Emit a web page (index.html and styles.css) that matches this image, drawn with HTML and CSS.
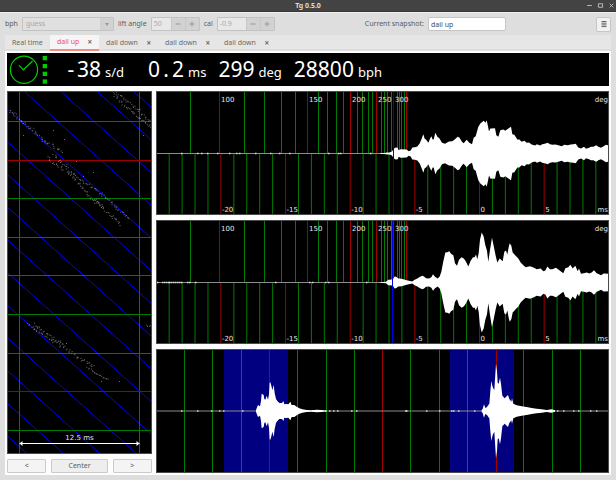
FILE: index.html
```html
<!DOCTYPE html>
<html lang="en">
<head>
    <meta charset="UTF-8">
    <meta name="viewport" content="width=device-width, initial-scale=1.0">
    <title>Tg 0.5.0</title>
    <link rel="stylesheet" href="styles.css">
</head>
<body>

<header class="titlebar">
    <h1>Tg 0.5.0</h1>
    <div class="window-buttons">
        <button type="button" aria-label="Minimize"><svg viewBox="0 0 6 6"><path d="M1 3h4"/></svg></button>
        <button type="button" aria-label="Maximize"><svg viewBox="0 0 6 6"><path d="M1.2 1.5h3.6v3h-3.6z"/></svg></button>
        <button type="button" aria-label="Close"><svg viewBox="0 0 6 6"><path d="M1.5 1.5l3 3M4.5 1.5l-3 3"/></svg></button>
    </div>
</header>

<div class="toolbar">
    <label for="bph">bph</label>
    <div class="combo">
        <select id="bph" disabled>
            <option>guess</option>
        </select>
        <span class="combo-arrow"></span>
    </div>

    <label for="lift">lift angle</label>
    <div class="spin">
        <input class="spin-lift" type="text" id="lift" value="50" disabled>
        <button type="button" disabled aria-label="Decrease lift angle"><svg viewBox="0 0 8 8"><path d="M1.5 4h5"/></svg></button>
        <button type="button" disabled aria-label="Increase lift angle"><svg viewBox="0 0 8 8"><path d="M1.5 4h5M4 1.5v5"/></svg></button>
    </div>

    <label for="cal">cal</label>
    <div class="spin">
        <input class="spin-cal" type="text" id="cal" value="-0.9" disabled>
        <button type="button" disabled aria-label="Decrease cal"><svg viewBox="0 0 8 8"><path d="M1.5 4h5"/></svg></button>
        <button type="button" disabled aria-label="Increase cal"><svg viewBox="0 0 8 8"><path d="M1.5 4h5M4 1.5v5"/></svg></button>
    </div>

    <div class="snapshot">
        <label for="snapshot">Current snapshot:</label>
        <input type="text" id="snapshot" value="dail up">
    </div>
    <button type="button" class="menu-button" aria-label="Menu">
        <svg viewBox="0 0 8 8"><path d="M1.5 1.5h5M1.5 3.2h5M1.5 4.9h5M1.5 6.6h5"/></svg>
    </button>
</div>

<nav class="tabs">
    <div class="tab tab-live"><button type="button">Real time</button></div>
    <div class="tab active"><button type="button">dail up</button><button type="button" class="close" aria-label="Close tab">×</button></div>
    <div class="tab"><button type="button">dail down</button><button type="button" class="close" aria-label="Close tab">×</button></div>
    <div class="tab"><button type="button">dail down</button><button type="button" class="close" aria-label="Close tab">×</button></div>
    <div class="tab"><button type="button">dail down</button><button type="button" class="close" aria-label="Close tab">×</button></div>
</nav>

<main class="content">
    <section class="readout">
        <svg class="clock" viewBox="0 0 45 33">
            <circle cx="17" cy="16.7" r="13.6"/>
            <path d="M12 12.4l4.4 4.4 9.2-8.8"/>
            <g class="signal">
                <rect x="35.7" y="3" width="4.3" height="4.3"/>
                <rect x="35.7" y="11" width="4.3" height="4.3"/>
                <rect x="35.7" y="18.7" width="4.3" height="4.3"/>
                <rect x="35.7" y="26.4" width="4.3" height="4.3"/>
            </g>
        </svg>
        <p><span class="value wide"><span class="cell">-</span>38</span><span class="unit">s/d</span></p>
        <p><span class="value wide">0<span class="cell">.</span>2</span><span class="unit">ms</span></p>
        <p><span class="value">299</span><span class="unit">deg</span></p>
        <p><span class="value">28800</span><span class="unit">bph</span></p>
    </section>

    <section class="panels">
        <div class="paper">
            <svg class="plot" id="paperstrip"></svg>
            <div class="paper-buttons">
                <button type="button">&lt;</button>
                <button type="button" class="center">Center</button>
                <button type="button">&gt;</button>
            </div>
        </div>
        <div class="waves">
            <svg class="plot" id="tic"></svg>
            <svg class="plot" id="toc"></svg>
            <svg class="plot" id="period"></svg>
        </div>
    </section>
</main>

<script src="plots.js"></script>
</body>
</html>
```

FILE: styles.css
```css
* {
    box-sizing: border-box;
}
body {
    margin: 0;
    height: 100vh;
    display: flex;
    flex-direction: column;
    background-color: #dedede;
    color: #5c5c5c;
    font-family: "Noto Sans", "Open Sans", sans-serif;
    font-size: 7px;
    line-height: 10px;
    overflow: hidden;
}
button, input, select {
    font: inherit;
    color: inherit;
    margin: 0;
    padding: 0;
    border: none;
    background: none;
}
button {
    display: flex;
    align-items: center;
    justify-content: center;
}

/* Title bar */
.titlebar {
    display: grid;
    grid-template-columns: 1fr auto 1fr;
    align-items: center;
    height: 12px;
    background-color: #434343;
    border-bottom: 1px solid #363636;
    color: #dcdcdc;
}
.titlebar h1 {
    grid-column: 2;
    margin: 0;
    font-size: 7px;
    font-weight: bold;
}
.window-buttons {
    display: flex;
    justify-content: flex-end;
    gap: 4px;
    padding-right: 1px;
}
.window-buttons svg {
    display: block;
    width: 7px;
    height: 7px;
    fill: none;
    stroke: #c0c0c0;
    stroke-width: 0.8;
}

/* Toolbar */
.toolbar {
    display: flex;
    align-items: center;
    gap: 4px;
    height: 23px;
    padding: 0 5px;
    border-top: 1px solid #f0f0f0;
}
.combo {
    display: flex;
    position: relative;
}
.combo select {
    width: 92px;
    height: 14px;
    padding: 0 3px;
    appearance: none;
    border: 1px solid #c3c3c3;
    border-radius: 1px;
    background: linear-gradient(to left, #d2d2d2 13px, #e0e0e0 13px);
    color: #a8a8a8;
    opacity: 1;
}
.combo-arrow {
    position: absolute;
    right: 5px;
    top: 6px;
    border: 2px solid transparent;
    border-top: 3px solid #999;
    border-bottom: none;
}
.spin {
    display: flex;
    height: 14px;
    border: 1px solid #c3c3c3;
    border-radius: 1px;
    background-color: #d2d2d2;
}
.spin input {
    padding: 0 2px;
    background-color: #e8e8e8;
    color: #a8a8a8;
}
.spin-lift {
    width: 19px;
}
.spin-cal {
    width: 28px;
}
.spin button {
    width: 14px;
    border-left: 1px solid #c8c8c8;
}
.spin svg {
    width: 8px;
    height: 8px;
    fill: none;
    stroke: #999;
    stroke-width: 1;
}
.snapshot {
    display: flex;
    align-items: center;
    gap: 4px;
    margin-left: auto;
    margin-right: 86px;
}
.snapshot input {
    width: 78px;
    height: 14px;
    padding: 0 2px;
    border: 1px solid #c6c6c6;
    border-radius: 2px;
    background-color: #fff;
    color: #4c4c4c;
}
.menu-button {
    width: 15px;
    height: 15px;
    border: 1px solid #c6c6c6;
    border-radius: 2px;
    background-color: #f2f2f2;
}
.menu-button svg {
    width: 8px;
    height: 8px;
    stroke: #666;
    stroke-width: 1;
}

/* Tabs */
.tabs {
    display: flex;
    height: 14px;
    margin: 0 5px 2px;
    background-color: #e6e6e6;
}
.tab {
    display: flex;
    align-items: center;
    justify-content: space-between;
    width: 59px;
    height: 16px;
    padding: 0 7px 1px 7px;
    color: #6a6a6a;
}
.tab-live {
    width: 45px;
}
.tab .close {
    font-size: 8px;
    font-weight: bold;
}
.tab.active {
    width: 49px;
    background-color: #f5f5f5;
    border-bottom: 2px solid #f48a84;
    padding-bottom: 0;
    color: #f0544c;
}
.tab.active .close {
    color: #6a6a6a;
}

/* Content */
.content {
    flex: 1;
    min-height: 0;
    display: flex;
    flex-direction: column;
    gap: 5px;
    margin: 0 5px 5px;
    padding: 2px;
    background-color: #fdfdfd;
}
.readout {
    display: flex;
    gap: 12px;
    height: 33px;
    background-color: #000;
    color: #fff;
}
.readout p {
    display: flex;
    align-items: baseline;
    gap: 4px;
    margin: 0;
    line-height: 33px;
}
.clock {
    width: 45px;
    height: 33px;
    margin-right: -11px;
    fill: none;
    stroke: #00cc00;
    stroke-width: 1.2;
}
.clock .signal {
    fill: #00cc00;
    stroke: none;
}
.value {
    font-size: 21px;
}
.value.wide {
    min-width: 48px;
    text-align: right;
}
.cell {
    display: inline-block;
    width: 12px;
    text-align: center;
}
.unit {
    font-size: 13px;
}
.panels {
    flex: 1;
    min-height: 0;
    display: grid;
    grid-template-columns: 145fr 453fr;
    gap: 4px;
}
.paper, .waves {
    display: flex;
    flex-direction: column;
    gap: 5px;
    min-width: 0;
    min-height: 0;
}
.plot {
    flex: 1;
    min-height: 0;
    width: 100%;
    display: block;
    background-color: #000;
}
.paper-buttons {
    display: flex;
    gap: 5px;
}
.paper-buttons button {
    flex: 39;
    height: 14px;
    border: 1px solid #cacaca;
    border-radius: 1px;
    background-color: #f4f4f4;
}
.paper-buttons .center {
    flex: 57;
    background-color: #eee;
}

/* Plot drawing */
.frame {
    fill: none;
    stroke: #4a4a4a;
}
.green {
    stroke: #007c00;
}
.red {
    stroke: #a00000;
}
.blue {
    stroke: #0000e8;
}
.slope {
    stroke: #0000ff;
}
.axis {
    stroke: #8c8c8c;
}
.window {
    fill: #000080;
}
.wave {
    fill: #fff;
}
.blip {
    fill: #fff;
    opacity: 0.7;
}
.dots {
    fill: #fff;
    opacity: 0.42;
}
.arrow {
    fill: #fff;
    stroke: #fff;
}
.plot text {
    font-family: "DejaVu Sans", sans-serif;
    font-size: 7px;
    fill: #e6e6e6;
}
```

FILE: plots.js
```javascript
const NS = 'http://www.w3.org/2000/svg';

// Base sizes that the data below is given in
const WAVE_W = 453, WAVE_H = 124;
const PAPER_W = 145, PAPER_H = 363;

const degTicks = [34, 88, 108, 125, 139, 151, 162, 171, 180, 187, 201, 206, 212, 216, 225, 228, 231, 235, 241, 243, 245, 248];
const degMajor = [[63, '100'], [151, '150'], [194, '200'], [220, '250'], [237, '300'], [250, '']];

// Envelopes as [x, half height], in thirds of a pixel
const ticWave = [
    [0, 1], [28, 3], [36, 6], [41, 14], [47, 18], [53, 17], [56, 10], [62, 13], [80, 12], [86, 7], [92, 9], [97, 18],
    [105, 19], [112, 21], [119, 30], [124, 42], [130, 58], [134, 44], [138, 42], [145, 32], [150, 44], [154, 52],
    [158, 42], [161, 42], [166, 62], [172, 50], [178, 46], [186, 32], [195, 29], [207, 36], [217, 37], [225, 43],
    [233, 50], [238, 48], [246, 35], [251, 31], [260, 41], [268, 32], [276, 28], [281, 47], [287, 52], [295, 80],
    [301, 90], [311, 98], [317, 92], [320, 100], [324, 82], [327, 66], [331, 75], [345, 76], [349, 55], [355, 50],
    [361, 70], [370, 72], [376, 68], [384, 74], [393, 80], [397, 58], [403, 56], [412, 42], [418, 42], [425, 35],
    [433, 38], [440, 32], [447, 33], [455, 27], [465, 24], [471, 28], [480, 24], [487, 28], [497, 30], [503, 32],
    [510, 28], [518, 26], [526, 27], [535, 25], [545, 22], [553, 26], [563, 25], [572, 27], [580, 28], [587, 29],
    [595, 18], [603, 15], [612, 20], [618, 14], [627, 17], [633, 20], [640, 20], [649, 25], [655, 20], [663, 17],
    [671, 22], [678, 26], [688, 24]
];
const tocWave = [
    [0, 1], [18, 2], [25, 8], [38, 9], [44, 18], [48, 17], [55, 12], [65, 11], [80, 7], [97, 3], [104, 8], [112, 12],
    [120, 17], [128, 20], [133, 17], [138, 13], [147, 12], [154, 16], [159, 25], [165, 17], [173, 12], [179, 18],
    [184, 32], [190, 64], [196, 90], [202, 91], [208, 94], [213, 86], [220, 82], [225, 58], [231, 50], [237, 68],
    [245, 76], [252, 71], [258, 62], [265, 48], [272, 65], [279, 76], [284, 76], [288, 84], [292, 70], [296, 88],
    [300, 128], [305, 150], [311, 138], [316, 112], [321, 95], [325, 62], [330, 98], [336, 134], [341, 110],
    [347, 80], [352, 60], [359, 72], [368, 64], [373, 92], [378, 96], [382, 84], [386, 106], [389, 118], [394, 110],
    [398, 90], [407, 80], [415, 72], [422, 60], [430, 52], [437, 46], [450, 49], [462, 44], [470, 40], [482, 42],
    [490, 34], [496, 36], [502, 48], [510, 40], [517, 40], [528, 44], [536, 38], [544, 32], [550, 28], [556, 43],
    [565, 46], [571, 53], [578, 42], [586, 50], [593, 34], [597, 42], [603, 26], [611, 28], [620, 30], [628, 27],
    [635, 30], [642, 37], [650, 28], [657, 25], [663, 22], [671, 27], [688, 26]
];
const periodTic = [
    [318, 2], [320, 8], [324, 18], [330, 14], [333, 30], [335, 52], [341, 48], [343, 36], [346, 34], [350, 46],
    [354, 34], [357, 50], [359, 85], [361, 86], [364, 76], [367, 62], [371, 78], [374, 54], [378, 36], [382, 30],
    [388, 24], [396, 24], [400, 30], [403, 20], [409, 21], [415, 20], [421, 28], [425, 18], [433, 18], [440, 13],
    [448, 8], [457, 5], [470, 3], [485, 2], [500, 4], [515, 3], [530, 1]
];
const periodToc = [
    [305, 3], [308, 6], [312, 20], [316, 9], [321, 12], [325, 18], [328, 22], [331, 60], [334, 90], [338, 72],
    [343, 62], [345, 95], [348, 142], [351, 120], [353, 85], [356, 82], [360, 100], [363, 82], [367, 46], [374, 38],
    [384, 48], [388, 36], [394, 28], [396, 38], [400, 22], [410, 17], [425, 14], [440, 12], [455, 9], [470, 7],
    [485, 5], [500, 3], [515, 5], [525, 2]
];

// Beat trails on the paper strip: spread, then points
const trails = [
    [3, [[0, 17], [16, 32], [30, 43], [38, 53]]],
    [2, [[38, 50], [50, 57], [55, 62]]],
    [2, [[40, 66], [62, 82], [83, 106], [98, 116]]],
    [2, [[46, 63], [70, 86], [97, 105], [121, 128]]],
    [2, [[84, 107], [100, 121], [115, 134]]],
    [2, [[105, 2], [119, 16], [145, 37]]],
    [2, [[110, 2], [123, 12], [145, 33]]],
    [2, [[20, 233], [56, 256], [74, 268], [88, 276]]],
    [2, [[26, 233], [50, 249], [56, 253]]],
    [1, [[80, 276], [92, 284], [102, 289]]],
    [2, [[140, 233], [145, 236]]]
];
const strayDots = [[46, 39], [57, 48], [16, 44], [69, 70], [76, 85], [86, 81], [136, 44], [0, 131], [59, 252], [94, 290], [112, 290]];

function add(parent, tag, attrs, text) {
    const el = document.createElementNS(NS, tag);
    for (const key in attrs) el.setAttribute(key, attrs[key]);
    if (text) el.textContent = text;
    parent.appendChild(el);
    return el;
}

function line(svg, cls, x1, y1, x2, y2) {
    add(svg, 'line', { class: cls, x1, y1, x2, y2 });
}

function start(id, baseW, baseH) {
    const svg = document.getElementById(id);
    svg.innerHTML = '';
    const w = svg.clientWidth, h = svg.clientHeight;
    return { svg, w, h, sx: w / baseW, sy: h / baseH };
}

function frame(p) {
    add(p.svg, 'rect', { class: 'frame', x: 0.5, y: 0.5, width: p.w - 1, height: p.h - 1 });
}

function envelope(p, data, offset, mid) {
    const top = data.map(([x, a]) => `${(offset + x / 3) * p.sx},${mid - a / 3 * p.sy}`);
    const bottom = data.map(([x, a]) => `${(offset + x / 3) * p.sx},${mid + a / 3 * p.sy}`).reverse();
    add(p.svg, 'polygon', { class: 'wave', points: top.concat(bottom).join(' ') });
}

function blips(p, xs, mid) {
    xs.forEach(x => add(p.svg, 'rect', { class: 'blip', x: x * p.sx, y: mid - 0.8, width: 1.5, height: 1.6 }));
}

function drawBeat(id, wave, noise, marker) {
    const p = start(id, WAVE_W, WAVE_H);
    const mid = Math.round(p.h / 2) + 0.5;

    degTicks.forEach(x => line(p.svg, 'green', x * p.sx + 0.5, 0, x * p.sx + 0.5, mid));
    degMajor.forEach(([x]) => line(p.svg, 'red', x * p.sx + 0.5, 0, x * p.sx + 0.5, mid));
    for (let ms = -24; ms < 10; ms++) {
        const x = (323.5 + ms * 12.93) * p.sx;
        line(p.svg, ms % 5 ? 'green' : 'red', x, mid, x, p.h);
    }
    line(p.svg, 'axis', 0, mid, p.w, mid);
    envelope(p, wave, 224, mid);
    blips(p, noise, mid);
    line(p.svg, 'blue', marker * p.sx, 0, marker * p.sx, p.h);
    frame(p);

    degMajor.forEach(([x, label]) => {
        if (label) add(p.svg, 'text', { x: x * p.sx + 2, y: 11 }, label);
    });
    for (let ms = -20; ms <= 5; ms += 5) {
        add(p.svg, 'text', { x: (323.5 + ms * 12.93) * p.sx + 1, y: p.h - 3 }, String(ms));
    }
    add(p.svg, 'text', { x: p.w - 1, y: 11, 'text-anchor': 'end' }, 'deg');
    add(p.svg, 'text', { x: p.w - 1, y: p.h - 3, 'text-anchor': 'end' }, 'ms');
}

function drawPeriod() {
    const p = start('period', WAVE_W, WAVE_H);
    const mid = Math.round(p.h / 2);
    [68, 294].forEach(x => add(p.svg, 'rect', { class: 'window', x: x * p.sx, y: 0, width: 64 * p.sx, height: p.h }));
    [28, 56, 85, 141, 170, 198, 254, 283, 311, 367, 396, 424].forEach(x => line(p.svg, 'green', x * p.sx + 0.5, 0, x * p.sx + 0.5, p.h));
    [113, 226, 340].forEach(x => line(p.svg, 'red', x * p.sx + 0.5, 0, x * p.sx + 0.5, p.h));
    line(p.svg, 'axis', 0, mid, p.w, mid);
    envelope(p, periodTic, -6, mid);
    envelope(p, periodToc, 224, mid);
    blips(p, [25, 41, 55, 63, 67, 86, 156, 161, 165, 169, 173, 177, 181, 195, 200, 249, 250, 270, 283, 295, 297, 302, 318, 392, 397, 401, 407, 417, 422, 434, 440], mid);
    frame(p);
}

function drawPaper() {
    const p = start('paperstrip', PAPER_W, PAPER_H);
    for (let y = -4; y < 12; y++) {
        line(p.svg, 'slope', 0, (17.7 + y * 32.7) * p.sy, p.w, (17.7 + y * 32.7 + 130) * p.sy);
    }
    [12, 132].forEach(x => line(p.svg, 'green', x * p.sx + 0.5, 0, x * p.sx + 0.5, p.h));
    for (let i = 0; i < 9; i++) {
        const y = Math.floor((30.7 + i * 38.55) * p.sy) + 0.5;
        line(p.svg, i === 1 || i === 7 ? 'red' : 'green', 0, y, p.w, y);
    }

    // Fixed seed so that a resize gives the same trace
    let seed = 7;
    const rand = () => (seed = seed * 16807 % 2147483647) / 2147483647 - 0.5;
    const dots = add(p.svg, 'g', { class: 'dots' });
    const dot = (x, y) => add(dots, 'rect', { x: x * p.sx, y: y * p.sy, width: 1, height: 1 });
    trails.forEach(([spread, pts]) => {
        for (let i = 1; i < pts.length; i++) {
            const [x1, y1] = pts[i - 1], [x2, y2] = pts[i];
            const steps = Math.ceil(Math.hypot(x2 - x1, y2 - y1) / 1.4);
            for (let s = 0; s < steps; s++) {
                const t = s / steps;
                dot(x1 + (x2 - x1) * t + rand() * spread * 1.5, y1 + (y2 - y1) * t + rand() * spread * 1.5);
            }
        }
    });
    strayDots.forEach(([x, y]) => dot(x, y));

    const ay = p.h - 10.5, left = 12.5 * p.sx, right = 132.5 * p.sx;
    line(p.svg, 'arrow', left, ay, right, ay);
    add(p.svg, 'path', { class: 'wave', d: `M${left} ${ay}l3 -2.5v5zM${right} ${ay}l-3 -2.5v5z` });
    add(p.svg, 'text', { x: (left + right) / 2, y: p.h - 14, 'text-anchor': 'middle' }, '12.5 ms');
    frame(p);
}

function drawAll() {
    drawPaper();
    drawBeat('tic', ticWave, [25, 41, 45, 51, 61, 73, 80, 83, 99, 114, 123, 133, 172, 182, 184, 214, 230], 237.5);
    drawBeat('toc', tocWave, [1, 6, 8, 10, 12, 13, 15, 17, 19, 21, 23, 25, 31, 33, 39, 119, 153, 156, 169, 172, 210], 236.5);
    drawPeriod();
}

window.addEventListener('resize', drawAll);
drawAll();
```
